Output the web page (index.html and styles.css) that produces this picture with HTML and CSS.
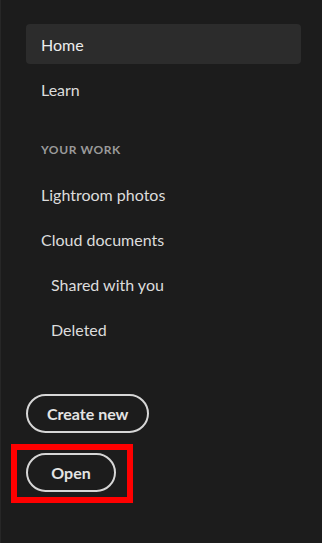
FILE: index.html
```html
<!DOCTYPE html>
<html lang="en">
<head>
<meta charset="utf-8">
<title>Sidebar</title>
<link rel="stylesheet" href="styles.css">
</head>
<body>
<aside class="sidebar">
  <nav class="nav">
    <a class="nav-item active">Home</a>
    <a class="nav-item">Learn</a>
    <div class="section-label">YOUR WORK</div>
    <a class="nav-item">Lightroom photos</a>
    <a class="nav-item">Cloud documents</a>
    <a class="nav-item sub">Shared with you</a>
    <a class="nav-item sub">Deleted</a>
  </nav>
  <div class="actions">
    <button class="btn">Create new</button>
    <div class="open-wrap">
      <button class="btn">Open</button>
      <span class="highlight"></span>
    </div>
  </div>
</aside>
</body>
</html>
```

FILE: styles.css
```css
html, body {
  margin: 0;
  padding: 0;
  background: #1c1c1c;
  height: 100%;
}
body {
  font-family: Lato, "Open Sans", sans-serif;
  color: #dedede;
}
.sidebar {
  box-sizing: border-box;
  height: 543px;
  border-left: 1px solid #272727;
  padding: 24px 21px 0 25px;
}
.nav {
  display: flex;
  flex-direction: column;
  gap: 5px;
}
.nav-item {
  display: flex;
  align-items: center;
  height: 40px;
  padding-left: 15px;
  border-radius: 4px;
  font-size: 16px;
  color: #dcdcdc;
}
.nav-item.active {
  background: #2c2c2c;
  color: #ececec;
}
.nav-item.sub {
  padding-left: 25px;
}
.section-label {
  display: flex;
  align-items: center;
  height: 40px;
  margin-top: 15px;
  padding-left: 15px;
  font-size: 12px;
  font-weight: 700;
  letter-spacing: 0.6px;
  color: #9a9a9a;
}
.actions {
  display: flex;
  flex-direction: column;
  align-items: flex-start;
  gap: 20px;
  margin-top: 45px;
}
.btn {
  box-sizing: border-box;
  height: 39px;
  min-width: 90px;
  padding: 0 19px;
  border: 2px solid #d6d6d6;
  border-radius: 20px;
  background: transparent;
  color: #e4e4e4;
  font-family: Lato, "Open Sans", sans-serif;
  font-size: 16px;
  font-weight: 700;
}
.open-wrap {
  position: relative;
}
.highlight {
  position: absolute;
  left: -15px;
  top: -9px;
  width: 122px;
  height: 59px;
  box-sizing: border-box;
  border: 6px solid #ff0000;
}
```
